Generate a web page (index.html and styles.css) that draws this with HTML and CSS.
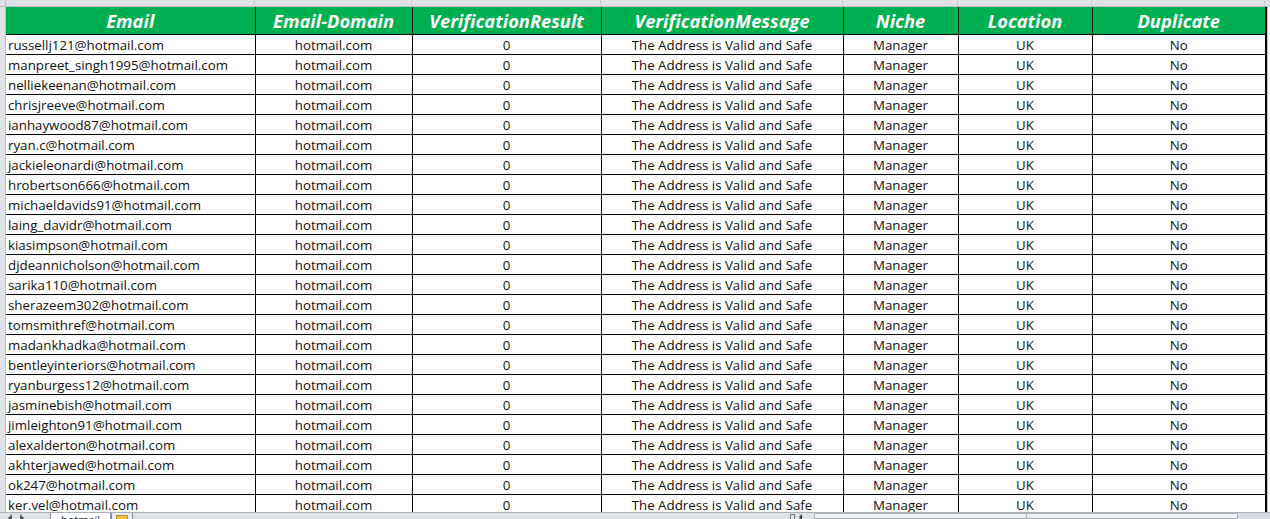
FILE: index.html
```html
<!DOCTYPE html>
<html>
<head>
<meta charset="utf-8">
<link rel="stylesheet" href="styles.css">
</head>
<body>
<div class="app">
  <div class="colbar">
    <div class="corner"></div>
    <div class="colhead w1"></div>
    <div class="colhead w2"></div>
    <div class="colhead w3"></div>
    <div class="colhead w4"></div>
    <div class="colhead w5"></div>
    <div class="colhead w6"></div>
    <div class="colhead w7"></div>
    <div class="colrest"></div>
  </div>
  <div class="sheet">
    <div class="rowheads"></div>
    <table class="grid">
      <colgroup>
        <col class="w1"><col class="w2"><col class="w3"><col class="w4"><col class="w5"><col class="w6"><col class="w7">
      </colgroup>
      <thead>
        <tr>
          <th>Email</th><th>Email-Domain</th><th>VerificationResult</th><th>VerificationMessage</th><th>Niche</th><th>Location</th><th>Duplicate</th>
        </tr>
      </thead>
      <tbody id="rows"></tbody>
    </table>
    <div class="rightgap"></div>
  </div>
  <div class="tabbar">
    <div class="tabnav">
      <span class="navbtn left"></span><span class="navbtn right"></span>
    </div>
    <div class="tab active">hotmail</div>
    <div class="tab newtab"><span class="newicon"></span></div>
    <div class="tabfill"></div>
    <div class="splitter"><span class="sbox"></span><span class="sarrow"></span></div>
    <div class="hscroll"><span class="grip"></span></div>
    <div class="hend"></div>
  </div>
</div>
<script src="app.js"></script>
</body>
</html>
```
FILE: app.js
```js
const emails = [
  "russellj121@hotmail.com","manpreet_singh1995@hotmail.com","nelliekeenan@hotmail.com","chrisjreeve@hotmail.com",
  "ianhaywood87@hotmail.com","ryan.c@hotmail.com","jackieleonardi@hotmail.com","hrobertson666@hotmail.com",
  "michaeldavids91@hotmail.com","laing_davidr@hotmail.com","kiasimpson@hotmail.com","djdeannicholson@hotmail.com",
  "sarika110@hotmail.com","sherazeem302@hotmail.com","tomsmithref@hotmail.com","madankhadka@hotmail.com",
  "bentleyinteriors@hotmail.com","ryanburgess12@hotmail.com","jasminebish@hotmail.com","jimleighton91@hotmail.com",
  "alexalderton@hotmail.com","akhterjawed@hotmail.com","ok247@hotmail.com","ker.vel@hotmail.com"
];
const tbody = document.getElementById("rows");
for (const e of emails) {
  const tr = document.createElement("tr");
  const vals = [e, "hotmail.com", "0", "The Address is Valid and Safe", "Manager", "UK", "No"];
  vals.forEach((v, i) => {
    const td = document.createElement("td");
    td.textContent = v;
    if (i === 0) td.className = "left";
    tr.appendChild(td);
  });
  tbody.appendChild(tr);
}
```
FILE: styles.css
```css
html, body {
  margin: 0;
  padding: 0;
  background: #ffffff;
  overflow: hidden;
}
.app {
  width: 1270px;
  height: 519px;
  display: flex;
  flex-direction: column;
  overflow: hidden;
  font-family: "Open Sans", "Liberation Sans", sans-serif;
}
.colbar {
  display: flex;
  height: 6px;
  flex: none;
  background: #dfe3e8;
  border-bottom: 1px solid #b9c0c8;
}
.colbar .corner {
  width: 6px;
  flex: none;
  border-right: 1px solid #b9c0c8;
  box-sizing: border-box;
}
.colhead {
  flex: none;
  box-sizing: border-box;
  border-right: 1px solid #c4cad1;
}
.colrest { flex: 1; }
.colhead.w1 { width: 249px; }
.colhead.w2 { width: 157px; }
.colhead.w3 { width: 189px; }
.colhead.w4 { width: 242px; }
.colhead.w5 { width: 115px; }
.colhead.w6 { width: 134px; }
.colhead.w7 { width: 173px; }

.sheet {
  flex: 1;
  display: flex;
  min-height: 0;
  overflow: hidden;
}
.rowheads {
  width: 6px;
  flex: none;
  background: #dfe3e8;
  border-right: 1px solid #b9c0c8;
  box-sizing: border-box;
}
.grid {
  border-collapse: collapse;
  table-layout: fixed;
  width: 1260px;
  flex: none;
  align-self: flex-start;
}
col.w1 { width: 249px; }
col.w2 { width: 157px; }
col.w3 { width: 189px; }
col.w4 { width: 242px; }
col.w5 { width: 115px; }
col.w6 { width: 134px; }
col.w7 { width: 174px; }

.grid th {
  background: #00b050;
  color: #ffffff;
  font-weight: 700;
  font-style: italic;
  font-size: 18.3px;
  height: 27px;
  padding: 0;
  border-left: 1px solid #1f1f1f;
  border-right: 2px solid #000;
  border-bottom: 1px solid #000;
  text-align: center;
  white-space: nowrap;
  line-height: 27px;
}
.grid th:first-child { border-left: none; }
.grid th:not(:last-child) { border-right: 1px solid #1f1f1f; }
.grid td {
  height: 19px;
  padding: 0;
  padding-top: 1px;
  box-sizing: border-box;
  font-size: 13.3px;
  color: #111;
  text-align: center;
  border: 1px solid #000;
  white-space: nowrap;
  overflow: hidden;
  line-height: 18px;
}
.grid tbody tr { height: 20px; }
.grid td:first-child { border-left: none; }
.grid td:last-child { border-right: 2px solid #000; }
.grid td.left {
  text-align: left;
  padding-left: 2px;
}
.rightgap {
  flex: 1;
  background: #ffffff;
  border-left: 1px solid #c8ccd2;
}

.tabbar {
  height: 6px;
  flex: none;
  display: flex;
  background: #dfe3e8;
  border-top: 1px solid #a9b0b8;
  font-size: 11px;
  color: #222;
  overflow: hidden;
  line-height: 14px;
}
.tabnav {
  width: 50px;
  display: flex;
  gap: 8px;
  padding-left: 8px;
  padding-top: 1px;
  box-sizing: border-box;
  flex: none;
}
.navbtn {
  width: 0;
  height: 0;
  border-top: 4px solid transparent;
  border-bottom: 4px solid transparent;
}
.navbtn.left { border-right: 4px solid #555; }
.navbtn.right { border-left: 4px solid #555; }
.tab {
  flex: none;
  padding: 0 10px;
  background: #ffffff;
  border-left: 1px solid #8a8f96;
  border-right: 1px solid #8a8f96;
}
.tab.newtab {
  width: 20px;
  padding: 0;
  background: #e8ebef;
  display: flex;
  justify-content: center;
}
.newicon {
  width: 10px;
  height: 8px;
  margin-top: 2px;
  background: #f0c040;
  border: 1px solid #c09020;
}
.tabfill { width: 655px; flex: none; }
.splitter {
  width: 26px;
  flex: none;
  display: flex;
  gap: 4px;
  padding-left: 2px;
  box-sizing: border-box;
}
.sbox {
  width: 5px;
  height: 6px;
  margin-top: 1px;
  border: 1px solid #777;
  box-sizing: border-box;
}
.sarrow {
  width: 0;
  height: 0;
  margin-top: 1px;
  border-top: 3px solid transparent;
  border-bottom: 3px solid transparent;
  border-right: 3px solid #333;
}
.hscroll {
  width: 424px;
  flex: none;
  background: #eef0f3;
  border: 1px solid #aab1b8;
  box-sizing: border-box;
  display: flex;
  justify-content: center;
}
.grip {
  width: 1px;
  height: 4px;
  margin-top: 1px;
  background: repeating-linear-gradient(to bottom, #777 0 1px, transparent 1px 2px);
}
.hend { flex: 1; background: #d6dbe1; }
```
